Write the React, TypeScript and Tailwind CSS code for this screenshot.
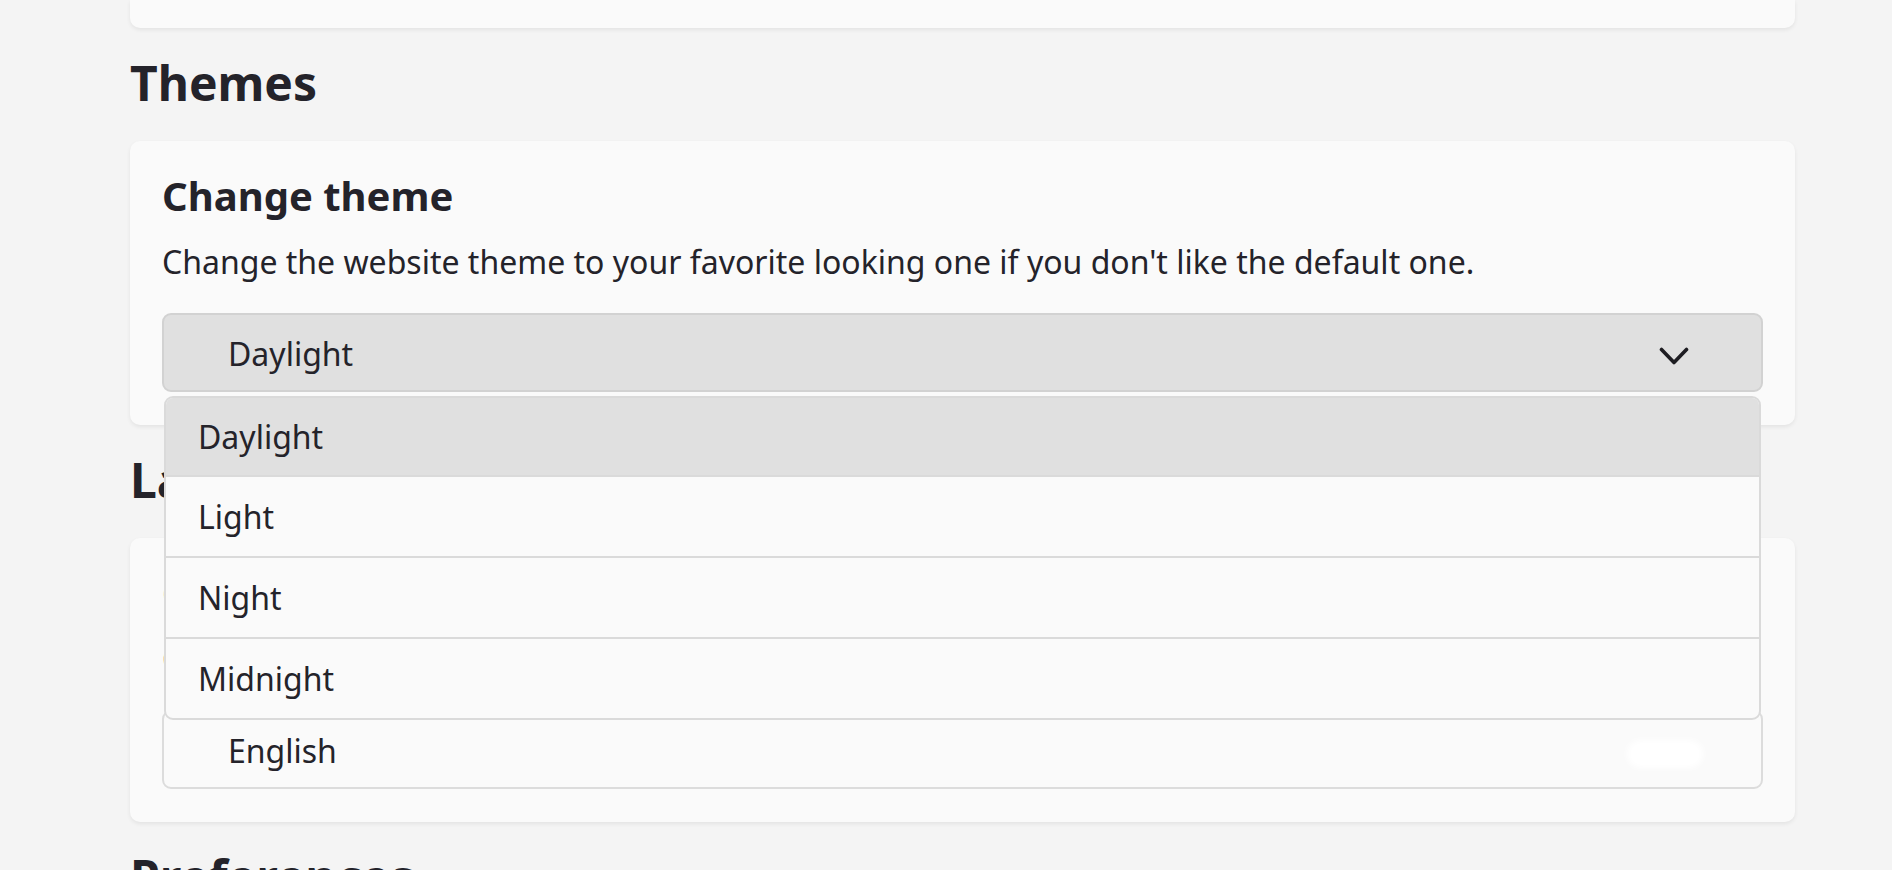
import React from 'react';

const themes = ['Daylight', 'Light', 'Night', 'Midnight'];

const Chevron: React.FC = () => (
  <svg width="30" height="19" viewBox="0 0 30 19" fill="none" className="mt-[5px] shrink-0">
    <polyline points="2.5,2.5 15,15.5 27.5,2.5" stroke="#1e1d22" strokeWidth="3.6" strokeLinecap="round" strokeLinejoin="round" />
  </svg>
);

const SectionTitle: React.FC<{ children: React.ReactNode }> = ({ children }) => (
  <h2 className="mt-[25px] mb-[28px] text-[48px] leading-[60px] font-bold text-[#24232a]">{children}</h2>
);

export default function App() {
  return (
    <div className="min-h-[870px] bg-[#f4f4f4] overflow-hidden font-['Noto_Sans',sans-serif] text-[#24232a]">
      <div className="ml-[130px] w-[1665px]">
        <div className="h-[28px] rounded-b-[10px] bg-[#fafafa] shadow-[0_2px_4px_rgba(0,0,0,0.07)]" />

        <SectionTitle>Themes</SectionTitle>
        <div className="rounded-[10px] bg-[#fafafa] px-[32px] pt-[31px] pb-[33px] shadow-[0_2px_4px_rgba(0,0,0,0.07)]">
          <h3 className="text-[40px] leading-[48px] font-bold">Change theme</h3>
          <p className="mt-[20px] text-[32px] leading-[43px]">
            Change the website theme to your favorite looking one if you don't like the default one.
          </p>
          <div className="relative mt-[30px]">
            <div className="flex h-[79px] items-center justify-between rounded-[9px] border-2 border-[#d2d2d2] bg-[#e0e0e0] pl-[64px] pr-[72px] pt-[3px]">
              <span className="text-[32px]">Daylight</span>
              <Chevron />
            </div>
            <div className="absolute left-[2px] right-[2px] top-[83px] z-10 overflow-hidden rounded-[9px] border-2 border-[#dadada] bg-[#fafafa]">
              {themes.map((t, i) => (
                <div
                  key={t}
                  className={
                    i === 0
                      ? 'flex h-[77px] items-center bg-[#e0e0e0] pl-[32px] text-[32px]'
                      : 'flex h-[81px] items-center border-t-2 border-[#dadada] pl-[32px] text-[32px]'
                  }
                >
                  {t}
                </div>
              ))}
            </div>
          </div>
        </div>

        <SectionTitle>Language</SectionTitle>
        <div className="rounded-[10px] bg-[#fafafa] px-[32px] pt-[31px] pb-[33px] shadow-[0_2px_4px_rgba(0,0,0,0.07)]">
          <h3 className="text-[40px] leading-[48px] font-bold">Change language</h3>
          <p className="mt-[20px] text-[32px] leading-[43px]">Change the language of the website to the one you prefer.</p>
          <div className="relative mt-[30px]">
            <div className="flex h-[79px] items-center rounded-[9px] border-2 border-[#dcdcdc] bg-[#fafafa] pl-[64px] pt-[3px]">
              <span className="text-[32px]">English</span>
            </div>
            <div className="absolute right-[60px] top-[30px] h-[28px] w-[76px] rounded-full bg-white blur-[3px]" />
          </div>
        </div>

        <SectionTitle>Preferences</SectionTitle>
      </div>
    </div>
  );
}
